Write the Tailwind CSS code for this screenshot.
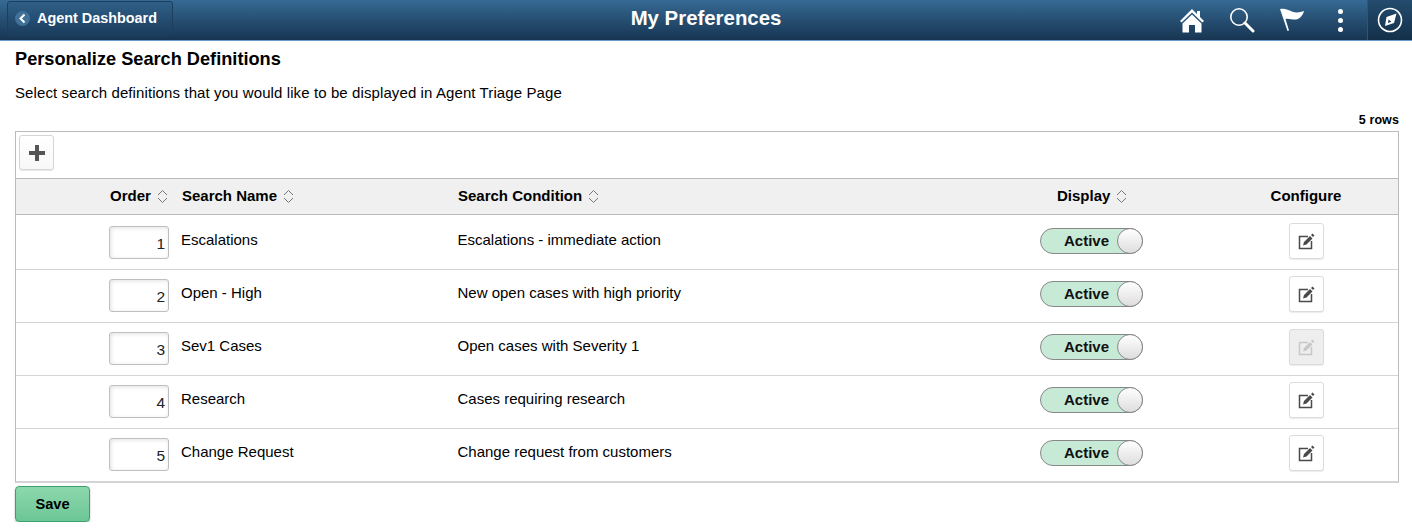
<!DOCTYPE html>
<html lang="en">
<head>
  <meta charset="UTF-8">
  <meta name="viewport" content="width=device-width, initial-scale=1.0">
  <title>My Preferences</title>
  <script src="https://cdn.jsdelivr.net/npm/@tailwindcss/browser@4"></script>
</head>
<body class="bg-white text-black font-['Liberation_Sans',Arial,sans-serif] overflow-hidden">
  <!-- Banner -->
  <header class="h-[41px] flex items-stretch justify-between relative border-b border-[#6d9cc9] bg-gradient-to-b from-[#366a94] to-[#173552]">
    <button class="mt-[1px] ml-[7px] w-[166px] h-[35px] flex items-center rounded-[3px] border border-[#1d3f5e] bg-gradient-to-b from-[#2f6089] to-[#1b3d5c] text-white text-[14.4px] font-bold">
      <span class="ml-[7px] mr-[7px] w-[15px] h-[15px] rounded-full bg-[#3f7199] flex items-center justify-center">
        <svg width="9" height="11" viewBox="0 0 9 11"><path d="M6.5 1.5 L2.5 5.5 L6.5 9.5" fill="none" stroke="#fff" stroke-width="2"/></svg>
      </span>
      Agent Dashboard
    </button>
    <h1 class="absolute left-0 right-0 top-[7px] text-center text-white text-[20.4px] leading-[23px] font-bold pointer-events-none">My Preferences</h1>
    <div class="flex items-stretch">
      <div class="w-[50px] flex items-center justify-center">
        <svg width="26" height="25" viewBox="0 0 26 25"><path fill="#fff" d="M13 1 L1 13 L2.6 14.6 L13 4.4 L23.4 14.6 L25 13 L21 9 L21 3 L18 3 L18 6 Z M13 6.4 L3.5 15.6 L3.5 24.5 L10 24.5 L10 17 L16 17 L16 24.5 L22.5 24.5 L22.5 15.6 Z"/></svg>
      </div>
      <div class="w-[50px] flex items-center justify-center">
        <svg width="26" height="26" viewBox="0 0 26 26"><circle cx="10" cy="10" r="8.2" fill="none" stroke="#fff" stroke-width="1.6"/><path d="M16 16 L24 24" stroke="#fff" stroke-width="3" stroke-linecap="round"/></svg>
      </div>
      <div class="w-[50px] flex items-center justify-center">
        <svg width="26" height="24" viewBox="0 0 26 24"><path fill="#fff" d="M1 1 C6 0 9 2 13 3.5 C17 5 21 4.5 25 3 C24 7 21 11 17 11.500 C13 12 10 10 6.500 11 L10 22.500 L8.500 23 Z"/></svg>
      </div>
      <div class="w-[50px] pr-[3px] flex flex-col items-center justify-center gap-[4px]">
        <span class="w-[5px] h-[5px] rounded-full bg-white"></span>
        <span class="w-[5px] h-[5px] rounded-full bg-white"></span>
        <span class="w-[5px] h-[5px] rounded-full bg-white"></span>
      </div>
      <div class="w-[45px] flex items-center justify-center border-l border-[#2f5678] bg-gradient-to-b from-[#244c6e] to-[#13304a]">
        <svg width="26" height="26" viewBox="0 0 26 26"><circle cx="13" cy="13" r="11.500" fill="none" stroke="#fff" stroke-width="1.600"/><path fill="#fff" fill-rule="evenodd" d="M19.500 6.500 L17 16 L8 19 L9.500 10 Z M11.500 12.500 L11 16 L14.500 14.800 Z"/></svg>
      </div>
    </div>
  </header>

  <main class="px-[15px]">
    <h2 class="mt-[8px] text-[18.2px] leading-[21px] font-bold">Personalize Search Definitions</h2>
    <p class="mt-[14px] text-[15px] tracking-[0.1px] leading-[17px]">Select search definitions that you would like to be displayed in Agent Triage Page</p>
    <div class="mt-[12px] w-[1384px] text-right text-[12.5px] tracking-[0.1px] leading-[14px] font-bold">5 rows</div>

    <section class="mt-[4px] w-[1384px] border border-[#bbbbbb] border-b-2 border-b-[#d4d4d4]">
      <!-- Toolbar -->
      <div class="h-[46px] pl-[3px] pt-[3px]">
        <button class="w-[35px] h-[35px] flex items-center justify-center rounded-[3px] border border-[#d5d5d5] bg-gradient-to-b from-white to-[#f8f8f8] shadow-[0_1px_1px_rgba(0,0,0,0.1)]">
          <svg width="16" height="16" viewBox="0 0 16 16"><path fill="#555" d="M6 0h4v6h6v4h-6v6H6v-6H0V6h6z"/></svg>
        </button>
      </div>

      <!-- Header row -->
      <div class="h-[37px] grid grid-cols-[93px_72px_276px_583px_174px_184px] items-center border-y border-[#bbbbbb] bg-[#f0f0f0] text-[15px] font-bold">
        <div></div>
        <div class="pl-[1px] flex items-center gap-[6px]">Order
          <svg width="11" height="15" viewBox="0 0 11 15"><path d="M1 6 L5.500 1.500 L10 6 M1 9 L5.500 13.500 L10 9" fill="none" stroke="#777" stroke-width="1"/></svg>
        </div>
        <div class="pl-[1px] flex items-center gap-[6px]">Search Name
          <svg width="11" height="15" viewBox="0 0 11 15"><path d="M1 6 L5.500 1.500 L10 6 M1 9 L5.500 13.500 L10 9" fill="none" stroke="#777" stroke-width="1"/></svg>
        </div>
        <div class="pl-[1px] flex items-center gap-[6px]">Search Condition
          <svg width="11" height="15" viewBox="0 0 11 15"><path d="M1 6 L5.500 1.500 L10 6 M1 9 L5.500 13.500 L10 9" fill="none" stroke="#777" stroke-width="1"/></svg>
        </div>
        <div class="pl-[17px] flex items-center gap-[6px]">Display
          <svg width="11" height="15" viewBox="0 0 11 15"><path d="M1 6 L5.500 1.500 L10 6 M1 9 L5.500 13.500 L10 9" fill="none" stroke="#777" stroke-width="1"/></svg>
        </div>
        <div class="text-center">Configure</div>
      </div>

      <!-- Rows -->
      <div id="rows"></div>
    </section>

    <button class="mt-[3px] w-[75px] h-[36px] rounded-[4px] border border-[#3d9f6d] bg-gradient-to-b from-[#8cd8ad] to-[#6cc695] shadow-[0_1px_2px_rgba(0,0,0,0.3)] text-[14.67px] font-bold">Save</button>
  </main>

  <script>
    // row data from the search definitions grid
    const rows = [
      { order: 1, name: 'Escalations', condition: 'Escalations - immediate action' },
      { order: 2, name: 'Open - High', condition: 'New open cases with high priority' },
      { order: 3, name: 'Sev1 Cases', condition: 'Open cases with Severity 1', disabled: true },
      { order: 4, name: 'Research', condition: 'Cases requiring research' },
      { order: 5, name: 'Change Request', condition: 'Change request from customers' }
    ];

    const editIcon = color => `<svg width="17" height="17" viewBox="0 0 17 17"><path fill="none" stroke="${color}" stroke-width="1.500" d="M10 3.500H1.500V15.500H13.500V8"/><path fill="${color}" d="M5 12.500 L6 9 L12 3 L14.500 5.500 L8.500 11.500 Z"/><path fill="${color}" d="M13 2 L14.500 0.500 L16.500 2.500 L15 4 Z"/></svg>`;

    document.getElementById('rows').innerHTML = rows.map((row, i) => `
      <div class="${i === 0 ? 'h-[55px] pt-[2px]' : i === rows.length - 1 ? 'h-[52px]' : 'h-[53px]'} ${i === rows.length - 1 ? '' : 'border-b border-[#d4d4d4]'} grid grid-cols-[93px_72px_276px_583px_174px_184px] items-center text-[15px]">
        <div></div>
        <div class="-mt-[2px] w-[60px] h-[33px] pr-[3px] pt-[4px] text-right text-[15.5px] leading-[26px] text-[#222] rounded-[3px] border border-[#bfbfbf] shadow-[inset_1px_1px_4px_rgba(0,0,0,0.12)]">${row.order}</div>
        <div class="-mt-[5px]">${row.name}</div>
        <div class="-mt-[5px] pl-[0.5px]">${row.condition}</div>
        <div class="-mt-[4px] w-[103px] h-[26px] relative rounded-full border border-[#888] bg-[#c7ead7] font-bold text-[#111] leading-[24px] pl-[23px]">Active
          <span class="absolute -right-[1px] -top-[1px] w-[26px] h-[26px] rounded-full border border-[#888] bg-gradient-to-b from-white to-[#dddddd]"></span>
        </div>
        <div class="-mt-[4px] flex justify-center">
          <button class="w-[35px] h-[36px] flex items-center justify-center rounded-[3px] border border-[#dcdcdc] shadow-[0_1px_1px_rgba(0,0,0,0.08)] ${row.disabled ? 'bg-[#eeeeee]' : 'bg-white'}">${editIcon(row.disabled ? '#c8c8c8' : '#4a4a4a')}</button>
        </div>
      </div>`).join('');
  </script>
</body>
</html>
